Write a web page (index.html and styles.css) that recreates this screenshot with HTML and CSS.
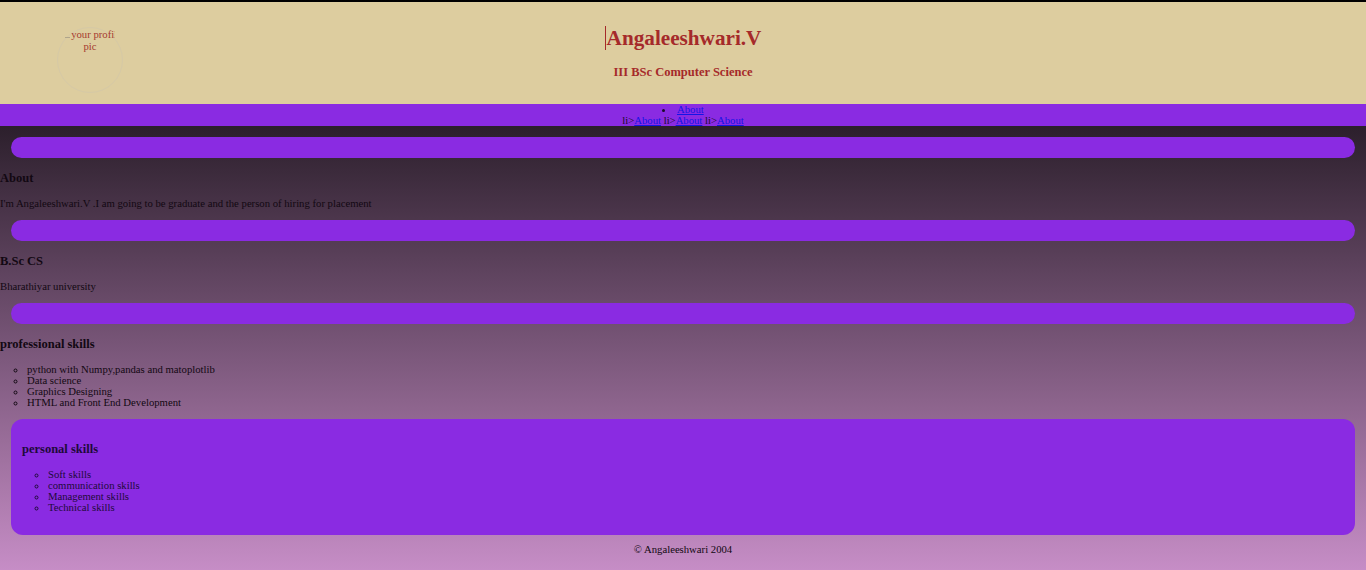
FILE: index.html
```html
<!DOCTYPE html>
<html lang="en">
<head>
<meta charset="utf-8">
<title>Angaleeshwari.V</title>
<link rel="stylesheet" href="styles.css">
</head>
<body>
<header class="hero">
  <div class="avatar">
    <div class="avatar-alt"><span><i class="broken"></i>your profile</span><span>pic</span></div>
  </div>
  <div class="intro">
    <h1 class="name"><span class="caret">Angaleeshwari.V</span></h1>
    <h3 class="degree">III BSc Computer Science</h3>
  </div>
  <div class="spacer"></div>
</header>
<nav class="menu">
  <ul class="menu-list"><li><a href="#about">About</a></li></ul>
  li&gt;<a href="#about">About</a> li&gt;<a href="#about">About</a> li&gt;<a href="#about">About</a>
</nav>
<main class="content">
  <section class="band"></section>
  <h3 class="title">About</h3>
  <p class="text">I'm Angaleeshwari.V .I am going to be graduate and the person of hiring for placement</p>
  <section class="band"></section>
  <h3 class="title">B.Sc CS</h3>
  <p class="text">Bharathiyar university</p>
  <section class="band"></section>
  <h3 class="title">professional skills</h3>
  <ul class="skills">
    <li>python with Numpy,pandas and matoplotlib</li>
    <li>Data science</li>
    <li>Graphics Designing</li>
    <li>HTML and Front End Development</li>
  </ul>
  <section class="band band-filled">
    <h3 class="title">personal skills</h3>
    <ul class="skills">
      <li>Soft skills</li>
      <li>communication skills</li>
      <li>Management skills</li>
      <li>Technical skills</li>
    </ul>
  </section>
</main>
<footer class="foot">
  <p class="text">© Angaleeshwari 2004</p>
</footer>
</body>
</html>
```
FILE: styles.css
```css
html {
  background: linear-gradient(180deg, #000000 0px, #c68dc6 570px);
  min-height: 100%;
}
body {
  margin: 0;
  font-family: "Liberation Serif", "Times New Roman", serif;
  font-size: 10.7px;
  line-height: 11px;
  color: #120812;
  min-height: 570px;
  background: linear-gradient(180deg, #000000 0px, #c68dc6 570px);
}
.hero {
  margin-top: 2px;
  background: #ddcd9f;
  padding: 10px 10px 11px;
  display: grid;
  grid-template-columns: 1fr auto 1fr;
  color: #a52a2a;
}
.avatar {
  justify-self: start;
  align-self: start;
  margin-left: 47px;
  margin-top: 15px;
  width: 64px;
  height: 64px;
  border: 1px solid #d6c9a6;
  border-radius: 50%;
  display: flex;
  justify-content: center;
}
.avatar-alt {
  width: 50px;
  overflow: hidden;
  display: flex;
  flex-direction: column;
  align-items: center;
  padding-top: 0;
  line-height: 12px;
  color: #a53a2f;
}
.avatar-alt span {
  white-space: nowrap;
}
.broken {
  display: inline-block;
  width: 12px;
  height: 8px;
  border-bottom: 1px solid #b0a58a;
  margin-right: 1px;
}
.intro {
  text-align: center;
}
.name {
  font-size: 21.2px;
  line-height: 25px;
  margin: 14px 0 15px;
  font-weight: bold;
}
.caret {
  border-left: 1px solid #a52a2a;
  padding-left: 1px;
}
.degree {
  font-size: 12.5px;
  line-height: 13px;
  margin: 0 0 13px;
}
.menu {
  background: #8a2be2;
  text-align: center;
  line-height: 11px;
  color: #1a0a2a;
}
.menu a {
  color: #1414e6;
}
.menu-list {
  margin: 0;
  padding: 0;
  list-style: disc;
  list-style-position: inside;
}
.content {
  padding-top: 0.1px;
}
.band {
  background: #8a2be2;
  margin: 11px;
  padding: 10.5px 11px;
  border-radius: 11px;
}
.band-filled {
  border-radius: 12px;
  padding: 10.5px 11px 11px;
  margin-bottom: 0;
}
.title {
  font-size: 12.5px;
  line-height: 14px;
  margin: 13px 0;
  font-weight: bold;
}
.band-filled .title,
.band-filled .skills {
  color: #1e0a3a;
}
.band-filled .title {
  margin-top: 12.5px;
}
.text {
  margin: 11px 0;
}
.skills {
  margin: 11px 0;
  padding-left: 27px;
  list-style: circle;
}
.band-filled .skills {
  padding-left: 26px;
}
.foot {
  text-align: center;
  padding-top: 0.1px;
  padding-bottom: 2px;
}
.foot .text {
  margin: 9px 0;
}
```
